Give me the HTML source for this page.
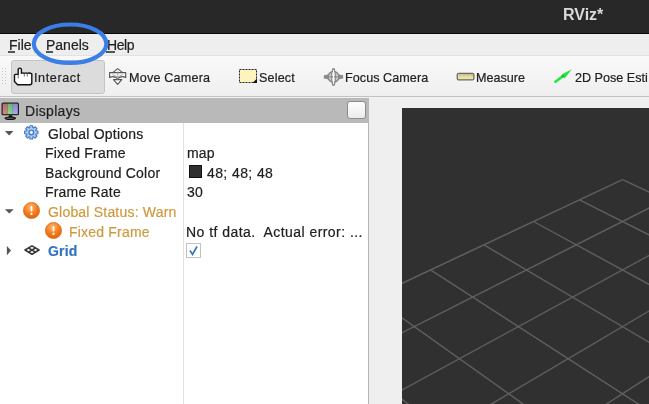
<!DOCTYPE html>
<html><head><meta charset="utf-8">
<style>
*{margin:0;padding:0;box-sizing:border-box}
html,body{width:649px;height:404px;overflow:hidden;background:#efefef;font-family:"Liberation Sans",sans-serif;color:#222}
.a{position:absolute;white-space:nowrap;will-change:transform;-webkit-text-stroke:0.2px currentColor}
#title{left:0;top:0;width:649px;height:33px;background:#282828}
#titleline{left:0;top:33px;width:649px;height:1px;background:#0a0a0a}
#ttext{left:563px;top:4.5px;font-weight:bold;font-size:16px;color:#dadada;line-height:20px;-webkit-text-stroke:0}
#menu{left:0;top:34px;width:649px;height:21px;background:#eeeeee}
#menuline{left:0;top:55px;width:649px;height:1px;background:#e2e2e2}
.mi{font-size:14px;line-height:14px;color:#202020;top:37.5px;letter-spacing:0.5px}
.ul{position:absolute;height:1.5px;background:#555;top:51.2px}
#tb{left:0;top:56px;width:649px;height:40px;background:linear-gradient(#f9f9f9,#efefef)}
#tbline{left:0;top:96px;width:649px;height:1px;background:#c2c2c2}
#tbline2{left:0;top:97px;width:649px;height:1px;background:#f2f2f2}
#ibtn{left:11px;top:60px;width:94px;height:34px;background:#dcdcdc;border:1px solid #c4c4c4;border-radius:3px}
.ti{font-size:12.6px;line-height:14px;color:#202020;top:71px}
#hdr{left:0;top:98px;width:369px;height:25px;background:#b9b9b9}
#dtext{left:25px;top:103px;font-size:14px;line-height:16px;color:#1e1e1e;letter-spacing:0.3px}
#float{left:347px;top:101px;width:19px;height:18px;border:1px solid #8c8c8c;border-radius:3px;background:linear-gradient(#fdfdfd,#ececec)}
#tree{left:0;top:123px;width:369px;height:281px;background:#fff;border-right:1px solid #b4b4b4}
#coldiv{left:183px;top:123px;width:1px;height:281px;background:#e2e2e2}
.tt{font-size:14px;line-height:16px;color:#202020;letter-spacing:0.2px}
#vp{left:402px;top:108px;width:247px;height:296px;background:#303030;overflow:hidden}
</style></head><body>
<div class="a" id="title"></div>
<div class="a" id="titleline"></div>
<div class="a" id="ttext">RViz*</div>
<div class="a" id="menu"></div>
<div class="a" id="menuline"></div>
<div class="a mi" style="left:9px;letter-spacing:0px">File</div><div class="ul" style="left:8px;width:7px"></div>
<div class="a mi" style="left:46px;letter-spacing:0px">Panels</div><div class="ul" style="left:46px;width:7px"></div>
<div class="a mi" style="left:107px;letter-spacing:-0.4px">Help</div><div class="ul" style="left:106px;width:9px"></div>
<div class="a" id="tb"></div>
<div class="a" id="tbline"></div>
<div class="a" id="tbline2"></div>
<svg class="a" style="left:0;top:60px" width="10" height="34">
<g fill="#c8c8c8"><rect x="2" y="8" width="1" height="1"/><rect x="5" y="8" width="1" height="1"/>
<rect x="2" y="11" width="1" height="1"/><rect x="5" y="11" width="1" height="1"/>
<rect x="2" y="14" width="1" height="1"/><rect x="5" y="14" width="1" height="1"/>
<rect x="2" y="17" width="1" height="1"/><rect x="5" y="17" width="1" height="1"/>
<rect x="2" y="20" width="1" height="1"/><rect x="5" y="20" width="1" height="1"/>
<rect x="2" y="23" width="1" height="1"/><rect x="5" y="23" width="1" height="1"/></g></svg>
<div class="a" id="ibtn"></div>
<svg class="a" style="left:12px;top:64px" width="24" height="24" viewBox="0 0 24 24">
<path d="M6.2 5.2 Q7.8 3 9.4 5.2 L9.4 9.3 Q10.9 8.4 12.3 9.3 Q13.8 8.4 15.3 9.3 Q17.6 8.6 19.8 9.8 L19.8 18.8 Q19.8 20.7 17.9 20.7 L5.6 20.7 L2.5 17.6 L2.5 11.2 Q2.5 10.4 3.3 10.4 L6.2 10.4 Z" fill="#fff" stroke="#111" stroke-width="1.4" stroke-linejoin="round"/>
<path d="M12.3 9.6 L12.3 12.6 M15.3 9.6 L15.3 12.6 M6.2 10.4 L6.2 14.5" stroke="#666" stroke-width="0.9"/>
</svg>
<div class="a ti" style="left:34px;letter-spacing:0.6px">Interact</div>
<svg class="a" style="left:108px;top:66px" width="20" height="20" viewBox="0 0 20 20">
<g stroke="#555" stroke-width="1.1" stroke-linejoin="round">
<path d="M9.65 2.6 L14.6 6.6 L4.7 6.6 Z" fill="#fff"/>
<path d="M1.6 11.6 L1.6 6.6 L17.7 6.6 L17.7 11.6 Q13.5 9.3 9.65 12.6 Q5.8 9.3 1.6 11.6 Z" fill="#fafafa"/>
<path d="M5.5 13.6 L13.8 13.6 L9.65 18.3 Z" fill="#fff"/>
</g>
<path d="M4.6 8.6 Q7.5 9.6 9.65 11.4 Q11.8 9.6 14.7 8.6" stroke="#999" stroke-width="0.8" fill="none"/>
<path d="M9.65 5.5 L9.65 14" stroke="#999" stroke-width="1.2" stroke-dasharray="1.2 0.8"/>
</svg>
<div class="a ti" style="left:128.5px;letter-spacing:0.2px">Move Camera</div>
<svg class="a" style="left:238px;top:68px" width="20" height="16" viewBox="0 0 20 16">
<rect x="1.5" y="1.5" width="17" height="13" fill="#fcf4bc" stroke="#222" stroke-width="1" stroke-dasharray="2 1"/>
<path d="M19 10.5 L19 15 L14.5 15 Z" fill="#111"/>
</svg>
<div class="a ti" style="left:259px;letter-spacing:0.15px">Select</div>
<svg class="a" style="left:320px;top:64px" width="28" height="26" viewBox="0 0 28 26">
<g fill="#8c8c8c">
<path d="M3.8 11.2 L9 10.2 L9 15.6 L3.8 14.6 Z"/>
<path d="M23.2 11.2 L18 10.2 L18 15.6 L23.2 14.6 Z"/>
<path d="M12.2 4.2 L14.8 4.2 L15.6 8.5 L11.4 8.5 Z"/>
<path d="M12.2 21.8 L14.8 21.8 L15.6 17.3 L11.4 17.3 Z"/>
</g>
<circle cx="13.5" cy="12.9" r="5.4" fill="#d6d6d6" stroke="#888" stroke-width="1.5"/>
<path d="M11.3 8.5 L11.3 17.3 M15.7 8.5 L15.7 17.3 M8.5 12.9 L18.5 12.9" stroke-width="0.9" stroke="#7a7a7a"/>
<path d="M13.5 6 L13.5 20" stroke="#fafafa" stroke-width="1"/>
</svg>
<div class="a ti" style="left:345px;letter-spacing:0.05px">Focus Camera</div>
<svg class="a" style="left:456px;top:72px" width="19" height="9" viewBox="0 0 19 9">
<rect x="1.3" y="1.3" width="16.6" height="6.6" rx="1.5" fill="#ebe2a6" stroke="#6a6a6a" stroke-width="1.3"/>
<path d="M4 2 L4 4.5 M6 2 L6 3.5 M8 2 L8 4.5 M10 2 L10 3.5 M12 2 L12 4.5 M14 2 L14 3.5 M16 2 L16 4.5" stroke="#9a9060" stroke-width="0.7"/>
</svg>
<div class="a ti" style="left:476px">Measure</div>
<svg class="a" style="left:550px;top:64px" width="26" height="24" viewBox="0 0 26 24">
<path d="M5.5 17.8 L13 12" stroke="#1fe83c" stroke-width="2.6" stroke-linecap="round"/>
<path d="M21.8 5.2 L11.6 10.6 L14.6 14.4 Z" fill="#1fe83c"/>
<circle cx="12.8" cy="12.2" r="1.3" fill="#18b834"/>
</svg>
<div class="a ti" style="left:575px">2D Pose Esti</div>

<div class="a" id="hdr"></div>
<svg class="a" style="left:0;top:98px" width="22" height="24" viewBox="0 0 22 24">
<defs><linearGradient id="sg" x1="0" y1="0" x2="0" y2="1"><stop offset="0" stop-color="#000" stop-opacity="0.12"/><stop offset="1" stop-color="#fff" stop-opacity="0.12"/></linearGradient></defs>
<rect x="1.5" y="4.5" width="17.5" height="12.8" rx="1.6" fill="#1e1e1e"/>
<rect x="2.7" y="5.7" width="4.7" height="10.4" fill="#d07676"/>
<rect x="7.4" y="5.7" width="5.4" height="10.4" fill="#7ed07e"/>
<rect x="12.8" y="5.7" width="5" height="10.4" fill="#9c9cec"/>
<rect x="2.7" y="5.7" width="15.1" height="10.4" fill="url(#sg)"/>
<path d="M9 17.2 L12 17.2 L12.8 19.4 L8.2 19.4 Z" fill="#111"/>
<ellipse cx="10.3" cy="20.3" rx="5.2" ry="1.25" fill="#555" stroke="#111" stroke-width="1.1"/>
</svg>
<div class="a" id="dtext">Displays</div>
<div class="a" id="float"></div>
<div class="a" id="tree"></div>
<div class="a" id="coldiv"></div>

<svg class="a" style="left:4px;top:130px" width="11" height="7"><path d="M0.9 1 L9.5 1 L5.2 5.6 Z" fill="#555"/></svg>
<svg class="a" style="left:21px;top:122px" width="21" height="21" viewBox="0 0 21 21">
<g transform="translate(10.3 10.4)">
<path d="M4.65 -1.54 L6.66 -1.35 L6.66 1.35 L4.65 1.54 L4.38 2.20 L5.67 3.76 L3.76 5.67 L2.20 4.38 L1.54 4.65 L1.35 6.66 L-1.35 6.66 L-1.54 4.65 L-2.20 4.38 L-3.76 5.67 L-5.67 3.76 L-4.38 2.20 L-4.65 1.54 L-6.66 1.35 L-6.66 -1.35 L-4.65 -1.54 L-4.38 -2.20 L-5.67 -3.76 L-3.76 -5.67 L-2.20 -4.38 L-1.54 -4.65 L-1.35 -6.66 L1.35 -6.66 L1.54 -4.65 L2.20 -4.38 L3.76 -5.67 L5.67 -3.76 L4.38 -2.20 Z" fill="#b4cdef" stroke="#3c76c6" stroke-width="1.1" stroke-linejoin="round"/>
<circle r="2.4" fill="none" stroke="#3c76c6" stroke-width="1.2"/>
<circle r="1.2" fill="#fff"/>
</g></svg>
<div class="a tt" style="left:48px;top:126px">Global Options</div>
<div class="a tt" style="left:45px;top:145px">Fixed Frame</div>
<div class="a tt" style="left:45px;top:165px">Background Color</div>
<div class="a tt" style="left:45px;top:184px">Frame Rate</div>
<svg class="a" style="left:4px;top:208px" width="11" height="7"><path d="M0.9 1.2 L9.7 1.2 L5.3 5.6 Z" fill="#555"/></svg>
<svg class="a" style="left:23px;top:202px" width="17" height="17" viewBox="0 0 16 16">
<defs><radialGradient id="og" cx="0.45" cy="0.3" r="0.75"><stop offset="0" stop-color="#ffb870"/><stop offset="0.55" stop-color="#f47a1c"/><stop offset="1" stop-color="#e06008"/></radialGradient></defs>
<circle cx="8" cy="8" r="7.6" fill="url(#og)" stroke="#d86a1a" stroke-width="0.7"/>
<path d="M8 4.6 L8 8" stroke="#fff" stroke-width="1.8" stroke-linecap="round"/>
<circle cx="8" cy="11.2" r="1.05" fill="#fff"/>
</svg>
<div class="a tt" style="left:48px;top:204px;color:#cf993e">Global Status: Warn</div>
<svg class="a" style="left:45px;top:222px" width="17" height="17" viewBox="0 0 16 16">
<circle cx="8" cy="8" r="7.6" fill="url(#og)" stroke="#d86a1a" stroke-width="0.7"/>
<path d="M8 4.6 L8 8" stroke="#fff" stroke-width="1.8" stroke-linecap="round"/>
<circle cx="8" cy="11.2" r="1.05" fill="#fff"/>
</svg>
<div class="a tt" style="left:69px;top:224px;color:#cf993e">Fixed Frame</div>
<svg class="a" style="left:6px;top:245.5px" width="6" height="10"><path d="M0.9 0 L5 4.6 L0.9 9.2 Z" fill="#555"/></svg>
<svg class="a" style="left:24px;top:245px" width="16" height="10" viewBox="0 0 16 10">
<g fill="none" stroke="#383838" stroke-width="1.6" stroke-linejoin="round"><path d="M8 0.9 L15 5 L8 9.2 L1 5 Z"/><path d="M4.5 2.95 L11.5 7.1 M11.5 2.95 L4.5 7.1"/></g></svg>
<div class="a tt" style="left:48px;top:243px;color:#3073c4;font-weight:bold">Grid</div>

<div class="a tt" style="left:187px;top:145px">map</div>
<div class="a" style="left:189px;top:165px;width:13px;height:13px;background:#303030;border:1px solid #111"></div>
<div class="a tt" style="left:207px;top:165px;letter-spacing:0.4px">48; 48; 48</div>
<div class="a tt" style="left:187px;top:184px">30</div>
<div class="a tt" style="left:186px;top:224px;letter-spacing:0.45px">No tf data.&nbsp; Actual error: ...</div>
<div class="a" style="left:186px;top:243px;width:15px;height:15px;background:#fff;border:1px solid #c2c2c2"></div>
<svg class="a" style="left:187px;top:244px" width="13" height="13" viewBox="0 0 13 13"><path d="M3 6.5 L5.5 10.5 L10 2.5" fill="none" stroke="#2f6fc0" stroke-width="1.6"/></svg>

<div class="a" id="vp">
<svg width="247" height="296" style="position:absolute;left:0;top:0"><g stroke="#5f5f5f" stroke-width="1.4" fill="none">
<line x1="220.50" y1="71.55" x2="847.21" y2="366.63"/>
<line x1="220.50" y1="71.55" x2="-405.85" y2="366.50"/>
<line x1="177.53" y1="91.79" x2="814.77" y2="413.54"/>
<line x1="263.47" y1="91.79" x2="-373.46" y2="413.39"/>
<line x1="131.45" y1="113.49" x2="778.64" y2="465.77"/>
<line x1="309.55" y1="113.48" x2="-337.40" y2="465.59"/>
<line x1="81.91" y1="136.81" x2="738.18" y2="524.26"/>
<line x1="359.09" y1="136.81" x2="-297.01" y2="524.07"/>
<line x1="28.52" y1="161.96" x2="692.55" y2="590.24"/>
<line x1="412.50" y1="161.95" x2="-251.45" y2="590.02"/>
<line x1="-29.20" y1="189.14" x2="640.69" y2="665.21"/>
<line x1="470.24" y1="189.14" x2="-199.67" y2="664.98"/>
<line x1="-91.80" y1="218.62" x2="581.24" y2="751.16"/>
<line x1="532.87" y1="218.63" x2="-140.30" y2="750.93"/>
<line x1="-159.93" y1="250.70" x2="512.40" y2="850.70"/>
<line x1="601.04" y1="250.72" x2="-71.54" y2="850.48"/>
<line x1="-234.34" y1="285.73" x2="431.74" y2="967.31"/>
<line x1="675.51" y1="285.78" x2="9.03" y2="967.12"/>
<line x1="-315.95" y1="324.16" x2="335.95" y2="1105.80"/>
<line x1="757.20" y1="324.24" x2="104.75" y2="1105.68"/>
<line x1="-405.85" y1="366.50" x2="220.32" y2="1272.99"/>
<line x1="847.21" y1="366.63" x2="220.32" y2="1272.99"/>
</g></svg>
</div>
<svg class="a" style="left:0;top:0" width="649" height="404"><ellipse cx="70.1" cy="43.7" rx="36.3" ry="19.2" fill="none" stroke="#3b7ee8" stroke-width="4.2"/></svg>
</body></html>
